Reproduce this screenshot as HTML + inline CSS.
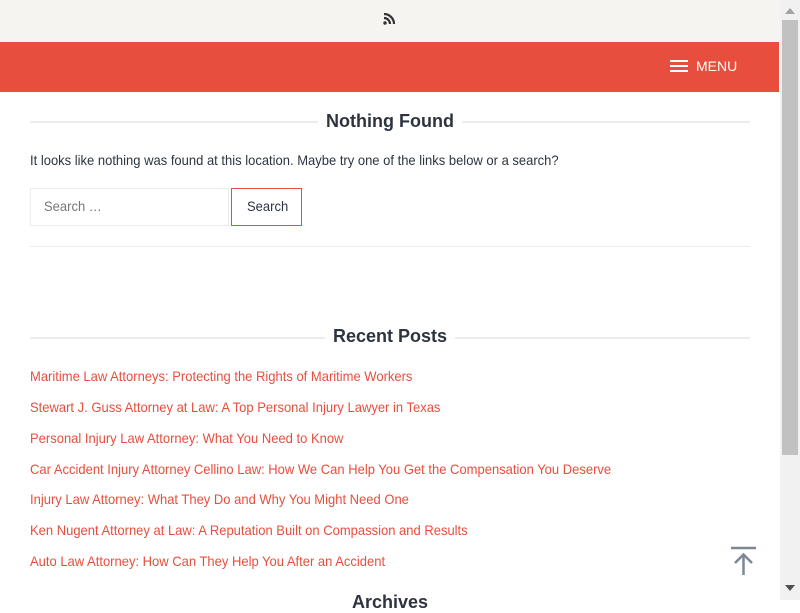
<!DOCTYPE html>
<html><head><meta charset="utf-8"><style>
body{margin:0;width:800px;height:600px;overflow:hidden;font-family:"Liberation Sans",sans-serif;background:#fff;position:relative}
.top{position:absolute;left:0;top:0;width:780px;height:42px;background:#f5f4f1}
.bar{position:absolute;left:0;top:42px;width:779px;height:50px;background:#e84e3e}
.menu{position:absolute;left:670px;top:58px;color:#fff;font-size:14px;display:flex;align-items:center}
.menu i{display:block;width:18px;height:2px;background:#fff;box-shadow:0 5px 0 #fff,0 -5px 0 #fff;margin-right:8px}
.h{position:absolute;left:30px;width:720px;height:2px;background:#ececec}
.t{position:absolute;left:0;width:780px;text-align:center;font-weight:bold;font-size:18px;color:#2d3440}
.t span{background:#fff;padding:0 8px}
.n{position:absolute;left:30px;white-space:nowrap;transform-origin:left top;transform:scaleX(.928);font-size:14px}
.a{color:#e84e3e}
.sb{position:absolute;right:0;top:0;width:20px;height:600px;background:#f1f1f1}
.th{position:absolute;right:2px;top:20px;width:16px;height:435px;background:#c1c1c1}
</style></head><body>
<div class="top"><svg style="position:absolute;left:383px;top:13px" width="12" height="12" viewBox="0 0 12 12"><circle cx="2" cy="10" r="1.7" fill="#333"/><path d="M1 5a6 6 0 0 1 6 6M1 1a10 10 0 0 1 10 10" stroke="#333" stroke-width="2.2" fill="none"/></svg></div>
<div class="bar"></div>
<div class="menu"><i></i>MENU</div>
<div class="h" style="top:121px"></div>
<div class="t" style="top:111px"><span>Nothing Found</span></div>
<div class="n" style="top:152px;color:#2d3440">It looks like nothing was found at this location. Maybe try one of the links below or a search?</div>
<div style="position:absolute;left:30px;top:188px;width:197px;height:36px;border:1px solid #ececec"></div>
<div class="n" style="left:44px;top:198px;color:#777">Search …</div>
<div style="position:absolute;left:231px;top:188px;width:69px;height:36px;border:1px solid #e84e3e"></div>
<div class="n" style="left:247px;top:198px;color:#2d3440">Search</div>
<div class="h" style="top:246px;height:1px"></div>
<div class="h" style="top:337px"></div>
<div class="t" style="top:326px"><span>Recent Posts</span></div>
<div class="n a" style="top:368px">Maritime Law Attorneys: Protecting the Rights of Maritime Workers</div>
<div class="n a" style="top:399px">Stewart J. Guss Attorney at Law: A Top Personal Injury Lawyer in Texas</div>
<div class="n a" style="top:430px">Personal Injury Law Attorney: What You Need to Know</div>
<div class="n a" style="top:461px">Car Accident Injury Attorney Cellino Law: How We Can Help You Get the Compensation You Deserve</div>
<div class="n a" style="top:491px">Injury Law Attorney: What They Do and Why You Might Need One</div>
<div class="n a" style="top:522px">Ken Nugent Attorney at Law: A Reputation Built on Compassion and Results</div>
<div class="n a" style="top:553px">Auto Law Attorney: How Can They Help You After an Accident</div>
<div class="t" style="top:592px"><span>Archives</span></div>
<svg style="position:absolute;left:730px;top:546px" width="28" height="30" viewBox="0 0 28 30"><path d="M1 2h25M13.5 29V8M5 17l8.5-8.5L22 17" stroke="#7d8796" stroke-width="2.5" fill="none"/></svg>
<div class="sb"><div class="th"></div>
<svg style="position:absolute;left:5px;top:8px" width="10" height="6"><path d="M0 6L5 0L10 6Z" fill="#a3a3a3"/></svg>
<svg style="position:absolute;left:5px;top:585px" width="10" height="6"><path d="M0 0L5 6L10 0Z" fill="#505050"/></svg></div>
</body></html>
